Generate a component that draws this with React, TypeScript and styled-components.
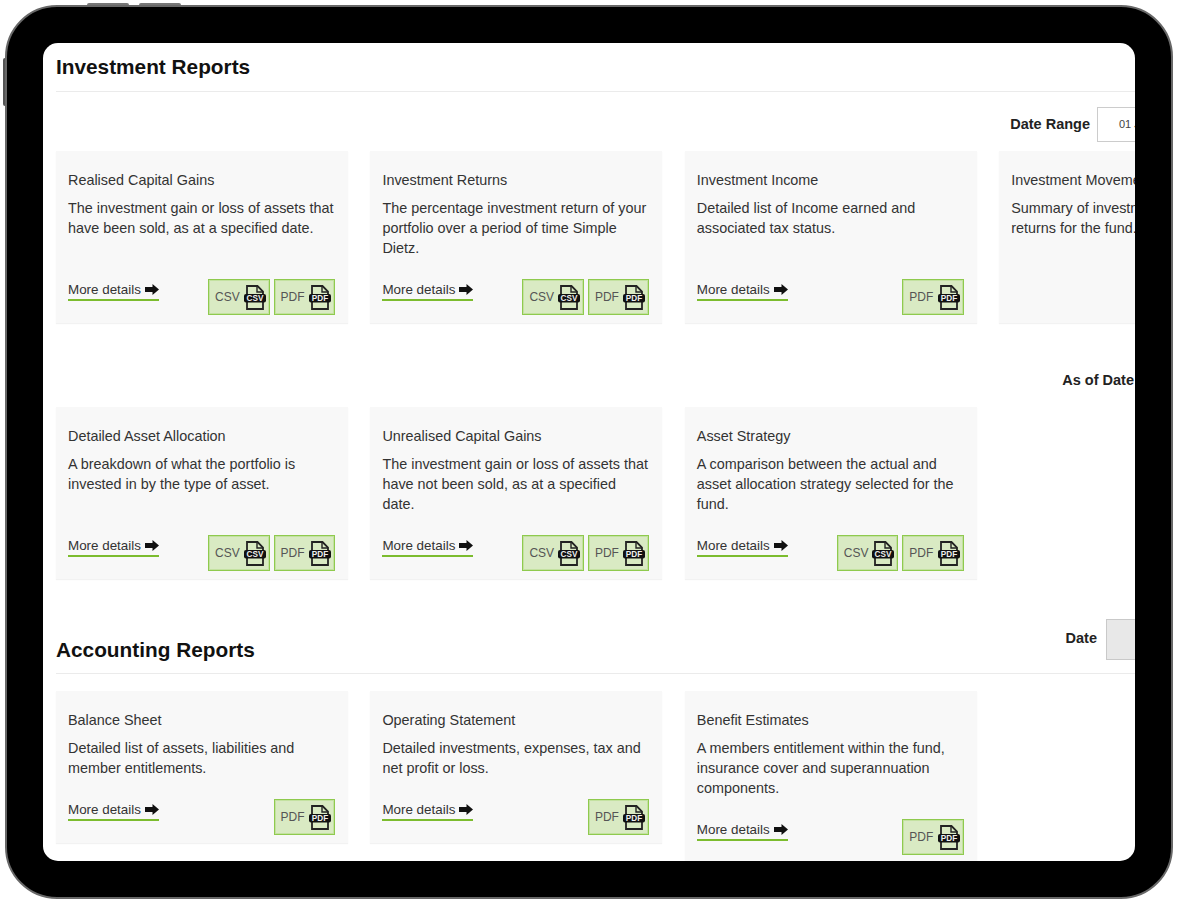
import React from "react"
import styled, { createGlobalStyle } from "styled-components"

const GlobalStyle = createGlobalStyle`
  html, body {
    margin: 0;
    padding: 0;
    background: #fff;
  }
  body {
    font-family: "Liberation Sans", Arial, sans-serif;
    color: #333;
  }
`

type ReportFormat = "CSV" | "PDF"

type Report = {
  title: string
  text: string
  formats?: ReportFormat[]
}

const investmentRow: Report[] = [
  {
    title: "Realised Capital Gains",
    text: "The investment gain or loss of assets that have been sold, as at a specified date.",
    formats: ["CSV", "PDF"],
  },
  {
    title: "Investment Returns",
    text: "The percentage investment return of your portfolio over a period of time Simple Dietz.",
    formats: ["CSV", "PDF"],
  },
  {
    title: "Investment Income",
    text: "Detailed list of Income earned and associated tax status.",
    formats: ["PDF"],
  },
  {
    title: "Investment Movements",
    text: "Summary of investment movements and returns for the fund.",
  },
]

const allocationRow: Report[] = [
  {
    title: "Detailed Asset Allocation",
    text: "A breakdown of what the portfolio is invested in by the type of asset.",
    formats: ["CSV", "PDF"],
  },
  {
    title: "Unrealised Capital Gains",
    text: "The investment gain or loss of assets that have not been sold, as at a specified date.",
    formats: ["CSV", "PDF"],
  },
  {
    title: "Asset Strategy",
    text: "A comparison between the actual and asset allocation strategy selected for the fund.",
    formats: ["CSV", "PDF"],
  },
]

const accountingRow: Report[] = [
  {
    title: "Balance Sheet",
    text: "Detailed list of assets, liabilities and member entitlements.",
    formats: ["PDF"],
  },
  {
    title: "Operating Statement",
    text: "Detailed investments, expenses, tax and net profit or loss.",
    formats: ["PDF"],
  },
  {
    title: "Benefit Estimates",
    text: "A members entitlement within the fund, insurance cover and superannuation components.",
    formats: ["PDF"],
  },
]

const ArrowIcon = () => (
  <ArrowSvg viewBox="0 0 14 11" aria-hidden="true">
    <path d="M0 3h7.5V0L14 5.5 7.5 11V8H0z" fill="#111" />
  </ArrowSvg>
)

const FileIcon: React.FC<{ format: ReportFormat }> = ({ format }) => (
  <FileSvg viewBox="0 0 22 25" aria-hidden="true">
    <path d="M3 9V1h10.5L19 6.5V9M3 17v7h16v-7" fill="none" stroke="#222" strokeWidth="1.8" />
    <path d="M13 1v6h6" fill="none" stroke="#222" strokeWidth="1.4" />
    <rect x="0" y="9" width="22" height="8.5" rx="2" fill="#111" />
    <text
      x="11"
      y="16.2"
      textAnchor="middle"
      fontSize="8.2"
      fontWeight="700"
      fontFamily="'Liberation Sans', sans-serif"
      fill="#eee"
    >
      {format}
    </text>
  </FileSvg>
)

const ReportCard: React.FC<{ report: Report }> = ({ report }) => (
  <Card>
    <CardTitle>{report.title}</CardTitle>
    <CardText>{report.text}</CardText>
    {report.formats && (
      <CardFooter>
        <MoreLink>
          More details
          <ArrowIcon />
        </MoreLink>
        <Downloads>
          {report.formats.map((format) => (
            <DownloadButton key={format}>
              {format}
              <FileIcon format={format} />
            </DownloadButton>
          ))}
        </Downloads>
      </CardFooter>
    )}
  </Card>
)

export default function App() {
  return (
    <>
      <GlobalStyle />
      <Page>
        <Tablet>
          <TopButton $left={80} />
          <TopButton $left={132} />
          <SideButton />
          <Screen>
            <Content>
              <SectionHeader>
                <SectionTitle>Investment Reports</SectionTitle>
              </SectionHeader>
              <Toolbar>
                <FieldLabel>Date Range</FieldLabel>
                <DateInput $width={194}>01 Jul 2020 - 30 Jun 2021</DateInput>
              </Toolbar>
              <CardGrid>
                {investmentRow.map((report) => (
                  <ReportCard key={report.title} report={report} />
                ))}
              </CardGrid>
              <Toolbar $spaced>
                <FieldLabel>As of Date</FieldLabel>
                <DateInput $width={150} />
              </Toolbar>
              <CardGrid>
                {allocationRow.map((report) => (
                  <ReportCard key={report.title} report={report} />
                ))}
              </CardGrid>
              <AccountingHeader>
                <AccountingTitle>Accounting Reports</AccountingTitle>
                <DateField>
                  <FieldLabel $lift={3}>Date</FieldLabel>
                  <DisabledInput />
                </DateField>
              </AccountingHeader>
              <CardGrid $top>
                {accountingRow.map((report) => (
                  <ReportCard key={report.title} report={report} />
                ))}
              </CardGrid>
            </Content>
          </Screen>
        </Tablet>
      </Page>
    </>
  )
}

const Page = styled.div`
  width: 1177px;
  height: 903px;
  padding: 5px 4px 4px 5px;
  box-sizing: border-box;
  overflow: hidden;
`

const Tablet = styled.div`
  position: relative;
  width: 100%;
  height: 100%;
  box-sizing: border-box;
  padding: 36px;
  background: #000;
  border: 2px solid #686868;
  border-radius: 52px;
`

const TopButton = styled.div<{ $left: number }>`
  position: absolute;
  top: -4px;
  left: ${(p) => p.$left}px;
  width: 42px;
  height: 2px;
  background: #777;
  border-radius: 2px 2px 0 0;
`

const SideButton = styled.div`
  position: absolute;
  top: 51px;
  left: -4px;
  width: 2px;
  height: 48px;
  background: #555;
  border-radius: 2px 0 0 2px;
`

const Screen = styled.div`
  height: 100%;
  background: #fff;
  border-radius: 15px;
  overflow: hidden;
`

const Content = styled.div`
  width: 1235px;
  margin-left: 13px;
`

const SectionHeader = styled.div`
  display: flex;
  height: 48px;
  align-items: center;
  border-bottom: 1px solid #ebebeb;
`

const SectionTitle = styled.h2`
  margin: 0;
  font-size: 20.8px;
  line-height: 24px;
  font-weight: 700;
  color: #111;
`

const AccountingTitle = styled(SectionTitle)`
  align-self: flex-end;
  padding-bottom: 11px;
`

const AccountingHeader = styled.div`
  display: flex;
  justify-content: space-between;
  height: 55px;
  box-sizing: border-box;
  margin: 40px 0 17px;
  border-bottom: 1px solid #ebebeb;
`

const Toolbar = styled.div<{ $spaced?: boolean }>`
  display: flex;
  justify-content: flex-end;
  align-items: center;
  gap: 7px;
  height: 35px;
  margin: ${(p) => (p.$spaced ? "40px" : "15px")} 0 9px;
`

const DateField = styled.div`
  display: flex;
  align-items: center;
  gap: 9px;
  height: 41px;
`

const FieldLabel = styled.span<{ $lift?: number }>`
  padding-bottom: ${(p) => p.$lift ?? 1}px;
  font-size: 14.5px;
  font-weight: 700;
  color: #222;
`

const DateInput = styled.div<{ $width: number }>`
  width: ${(p) => p.$width}px;
  height: 35px;
  box-sizing: border-box;
  padding-left: 21px;
  border: 1px solid #ccc;
  background: #fff;
  font-size: 11px;
  line-height: 33px;
  white-space: nowrap;
  color: #444;
`

const DisabledInput = styled.div`
  width: 185px;
  height: 41px;
  box-sizing: border-box;
  background: #e8e8e8;
  border: 1px solid #c9c9c9;
`

const CardGrid = styled.div<{ $top?: boolean }>`
  display: grid;
  grid-template-columns: repeat(4, 292px);
  column-gap: 22.4px;
  align-items: ${(p) => (p.$top ? "start" : "stretch")};
`

const Card = styled.div`
  display: flex;
  flex-direction: column;
  box-sizing: border-box;
  padding: 19px 13px 8px 12px;
  background: #f8f8f8;
  box-shadow: 0 1px 1px rgba(0, 0, 0, 0.05);
`

const CardTitle = styled.div`
  font-size: 14.4px;
  line-height: 20px;
  color: #333;
`

const CardText = styled.p`
  margin: 8px 0 0;
  font-size: 14.4px;
  line-height: 20px;
  color: #333;
`

const CardFooter = styled.div`
  display: flex;
  justify-content: space-between;
  align-items: flex-start;
  margin-top: auto;
  padding-top: 21px;
`

const MoreLink = styled.a`
  display: inline-flex;
  align-items: center;
  gap: 4px;
  height: 19px;
  margin-top: 1px;
  border-bottom: 2px solid #7cbc2e;
  font-size: 13.4px;
  color: #333;
`

const ArrowSvg = styled.svg`
  width: 14px;
  height: 11px;
`

const Downloads = styled.div`
  display: flex;
  gap: 4px;
`

const DownloadButton = styled.button`
  display: flex;
  align-items: center;
  justify-content: space-between;
  width: 61.5px;
  height: 36px;
  box-sizing: border-box;
  padding: 0 3px 0 6px;
  background: #d9eac3;
  border: 1px solid #8fca4e;
  box-shadow: inset 0 0 0 1px #c3e1a0;
  font-family: inherit;
  font-size: 12px;
  color: #555;
`

const FileSvg = styled.svg`
  width: 22px;
  height: 25px;
`
